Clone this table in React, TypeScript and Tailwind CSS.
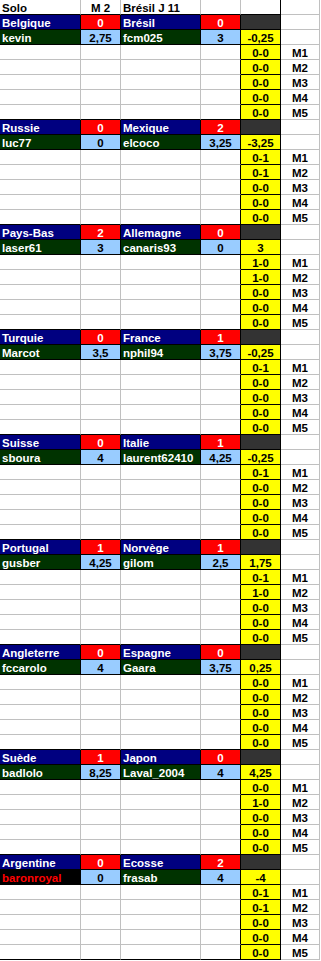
import { Fragment } from 'react'

type Cell = {
  t?: string
  bg?: string
  fg?: string
  center?: boolean
}

type Match = {
  home: string
  hs: string
  away: string
  as: string
  p1: string
  v1: string
  p2: string
  v2: string
  diff: string
  res: string[]
  red?: boolean
}

const MATCHES: Match[] = [
  { home: 'Belgique', hs: '0', away: 'Brésil', as: '0', p1: 'kevin', v1: '2,75', p2: 'fcm025', v2: '3', diff: '-0,25', res: ['0-0', '0-0', '0-0', '0-0', '0-0'] },
  { home: 'Russie', hs: '0', away: 'Mexique', as: '2', p1: 'luc77', v1: '0', p2: 'elcoco', v2: '3,25', diff: '-3,25', res: ['0-1', '0-1', '0-0', '0-0', '0-0'] },
  { home: 'Pays-Bas', hs: '2', away: 'Allemagne', as: '0', p1: 'laser61', v1: '3', p2: 'canaris93', v2: '0', diff: '3', res: ['1-0', '1-0', '0-0', '0-0', '0-0'] },
  { home: 'Turquie', hs: '0', away: 'France', as: '1', p1: 'Marcot', v1: '3,5', p2: 'nphil94', v2: '3,75', diff: '-0,25', res: ['0-1', '0-0', '0-0', '0-0', '0-0'] },
  { home: 'Suisse', hs: '0', away: 'Italie', as: '1', p1: 'sboura', v1: '4', p2: 'laurent62410', v2: '4,25', diff: '-0,25', res: ['0-1', '0-0', '0-0', '0-0', '0-0'] },
  { home: 'Portugal', hs: '1', away: 'Norvège', as: '1', p1: 'gusber', v1: '4,25', p2: 'gilom', v2: '2,5', diff: '1,75', res: ['0-1', '1-0', '0-0', '0-0', '0-0'] },
  { home: 'Angleterre', hs: '0', away: 'Espagne', as: '0', p1: 'fccarolo', v1: '4', p2: 'Gaara', v2: '3,75', diff: '0,25', res: ['0-0', '0-0', '0-0', '0-0', '0-0'] },
  { home: 'Suède', hs: '1', away: 'Japon', as: '0', p1: 'badlolo', v1: '8,25', p2: 'Laval_2004', v2: '4', diff: '4,25', res: ['0-0', '1-0', '0-0', '0-0', '0-0'] },
  { home: 'Argentine', hs: '0', away: 'Ecosse', as: '2', p1: 'baronroyal', v1: '0', p2: 'frasab', v2: '4', diff: '-4', res: ['0-1', '0-1', '0-0', '0-0', '0-0'], red: true },
]

const NAVY = 'bg-[#000080]'
const RED = 'bg-[#ff0000]'
const GREEN = 'bg-[#003300]'
const SKY = 'bg-[#99ccff]'
const YELLOW = 'bg-[#ffff00]'
const DARK = 'bg-[#333333]'

const buildRows = (): Cell[][] => {
  const rows: Cell[][] = [
    [{ t: 'Solo' }, { t: 'M 2', center: true }, { t: 'Brésil J 11' }, {}, {}, {}],
  ]
  for (const m of MATCHES) {
    rows.push([
      { t: m.home, bg: NAVY, fg: 'text-white' },
      { t: m.hs, bg: RED, fg: 'text-white', center: true },
      { t: m.away, bg: NAVY, fg: 'text-white' },
      { t: m.as, bg: RED, fg: 'text-white', center: true },
      { bg: DARK },
      {},
    ])
    rows.push([
      { t: m.p1, bg: m.red ? 'bg-black' : GREEN, fg: m.red ? 'text-[#ff0000]' : 'text-white' },
      { t: m.v1, bg: SKY, center: true },
      { t: m.p2, bg: GREEN, fg: 'text-white' },
      { t: m.v2, bg: SKY, center: true },
      { t: m.diff, bg: YELLOW, center: true },
      {},
    ])
    m.res.forEach((r, i) => {
      rows.push([{}, {}, {}, {}, { t: r, bg: YELLOW, center: true }, { t: `M${i + 1}`, center: true }])
    })
  }
  return rows
}

const ROWS = buildRows()

export default function App() {
  return (
    <div className="w-[321px] bg-white font-[family-name:Liberation_Sans,Arial,sans-serif] text-[length:11.5px] font-bold text-black">
      <div className="grid grid-cols-[81px_40px_80px_40px_40px_39px]">
        {ROWS.map((row, r) => (
          <Fragment key={r}>
            {row.map((cell, c) => {
              const next = row[c + 1]
              const below = ROWS[r + 1]?.[c]
              const rightBlack = !!cell.bg || !!next?.bg || c === 4
              const bottomBlack = !!cell.bg || !!below?.bg || (r === ROWS.length - 1 && c < 5)
              return (
                <div
                  key={c}
                  className={`h-[15px] border-r border-b pt-[1px] leading-[14px] whitespace-nowrap ${
                    rightBlack ? 'border-r-black' : 'border-r-[#c0c0c0]'
                  } ${bottomBlack ? 'border-b-black' : 'border-b-[#c0c0c0]'} ${cell.bg ?? ''} ${
                    cell.fg ?? 'text-black'
                  } ${cell.center ? 'text-center' : 'pl-[2px]'}`}
                >
                  {cell.t}
                </div>
              )
            })}
          </Fragment>
        ))}
      </div>
    </div>
  )
}
